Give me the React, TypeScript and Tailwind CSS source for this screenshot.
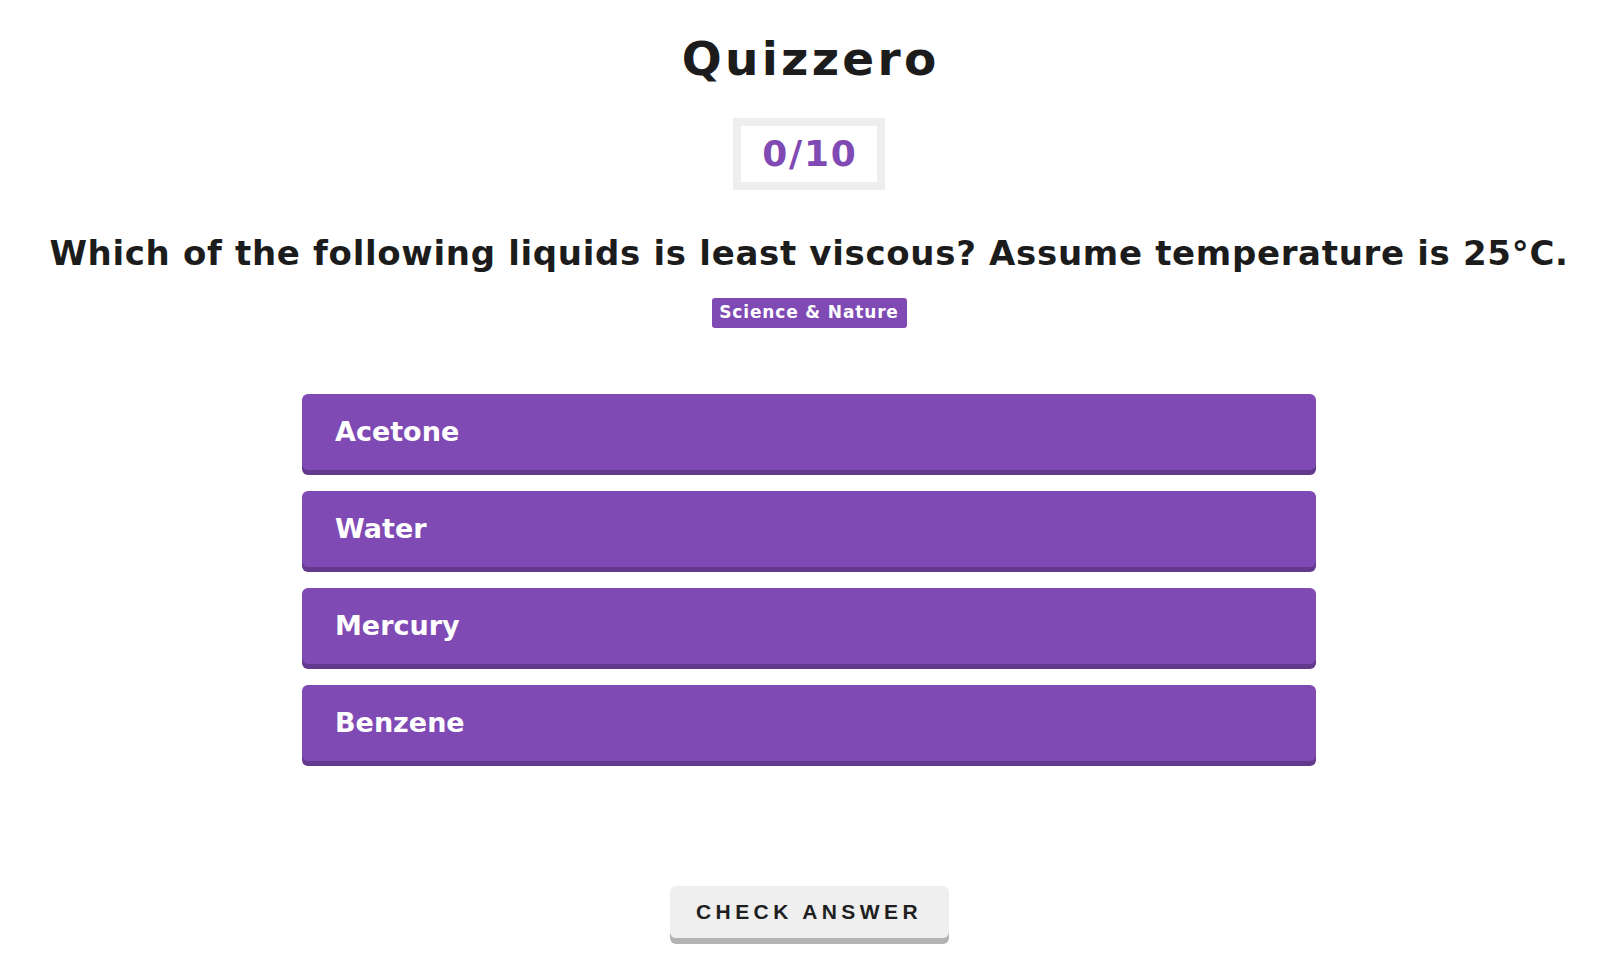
import { useState } from "react"

const answers = ["Acetone", "Water", "Mercury", "Benzene"]

function App() {
  const [picked, setPicked] = useState<string | null>(null)

  return (
    <div className="min-h-screen w-full bg-white pl-2 flex flex-col items-center font-['DejaVu_Sans',sans-serif] text-[#1c1c1c]">
      <h1 className="mt-[36px] text-[47px] leading-[46px] font-bold tracking-[0.07em] pl-[0.07em]">Quizzero</h1>

      <div className="mt-[36px] w-[152px] h-[72px] border-[8px] border-[#eeeeee] flex items-center justify-center">
        <span className="text-[36px] leading-none font-bold tracking-[0.05em] pl-[0.05em] text-[#7f4ab4]">0/10</span>
      </div>

      <h2 className="mt-[47px] text-[34px] leading-[33px] font-bold tracking-[0.02em] whitespace-nowrap">
        Which of the following liquids is least viscous? Assume temperature is 25°C.
      </h2>

      <span className="mt-[28px] h-[30px] w-[195px] rounded-[3px] bg-[#7f4ab4] text-white text-[17px] font-bold tracking-[0.05em] flex items-center justify-center">
        Science &amp; Nature
      </span>

      <div className="mt-[66px] w-[1014px] flex flex-col gap-[21px]">
        {answers.map((a) => (
          <button
            key={a}
            onClick={() => setPicked(a)}
            className={
              "h-[76px] w-full rounded-md px-[33px] text-left text-white text-[27px] font-bold shadow-[0_5px_0_#62398c] " +
              (picked === a ? "bg-[#6b3a9c]" : "bg-[#7f4ab4]")
            }
          >
            {a}
          </button>
        ))}
      </div>

      <button className="mt-[125px] w-[279px] h-[52px] rounded-md bg-[#efefef] shadow-[0_6px_0_#b3b3b3] font-['Liberation_Sans',Arial,sans-serif] font-bold text-[21px] tracking-[0.21em] text-[#1f1f1f] flex items-center justify-center">
        CHECK ANSWER
      </button>
    </div>
  )
}

export default App
